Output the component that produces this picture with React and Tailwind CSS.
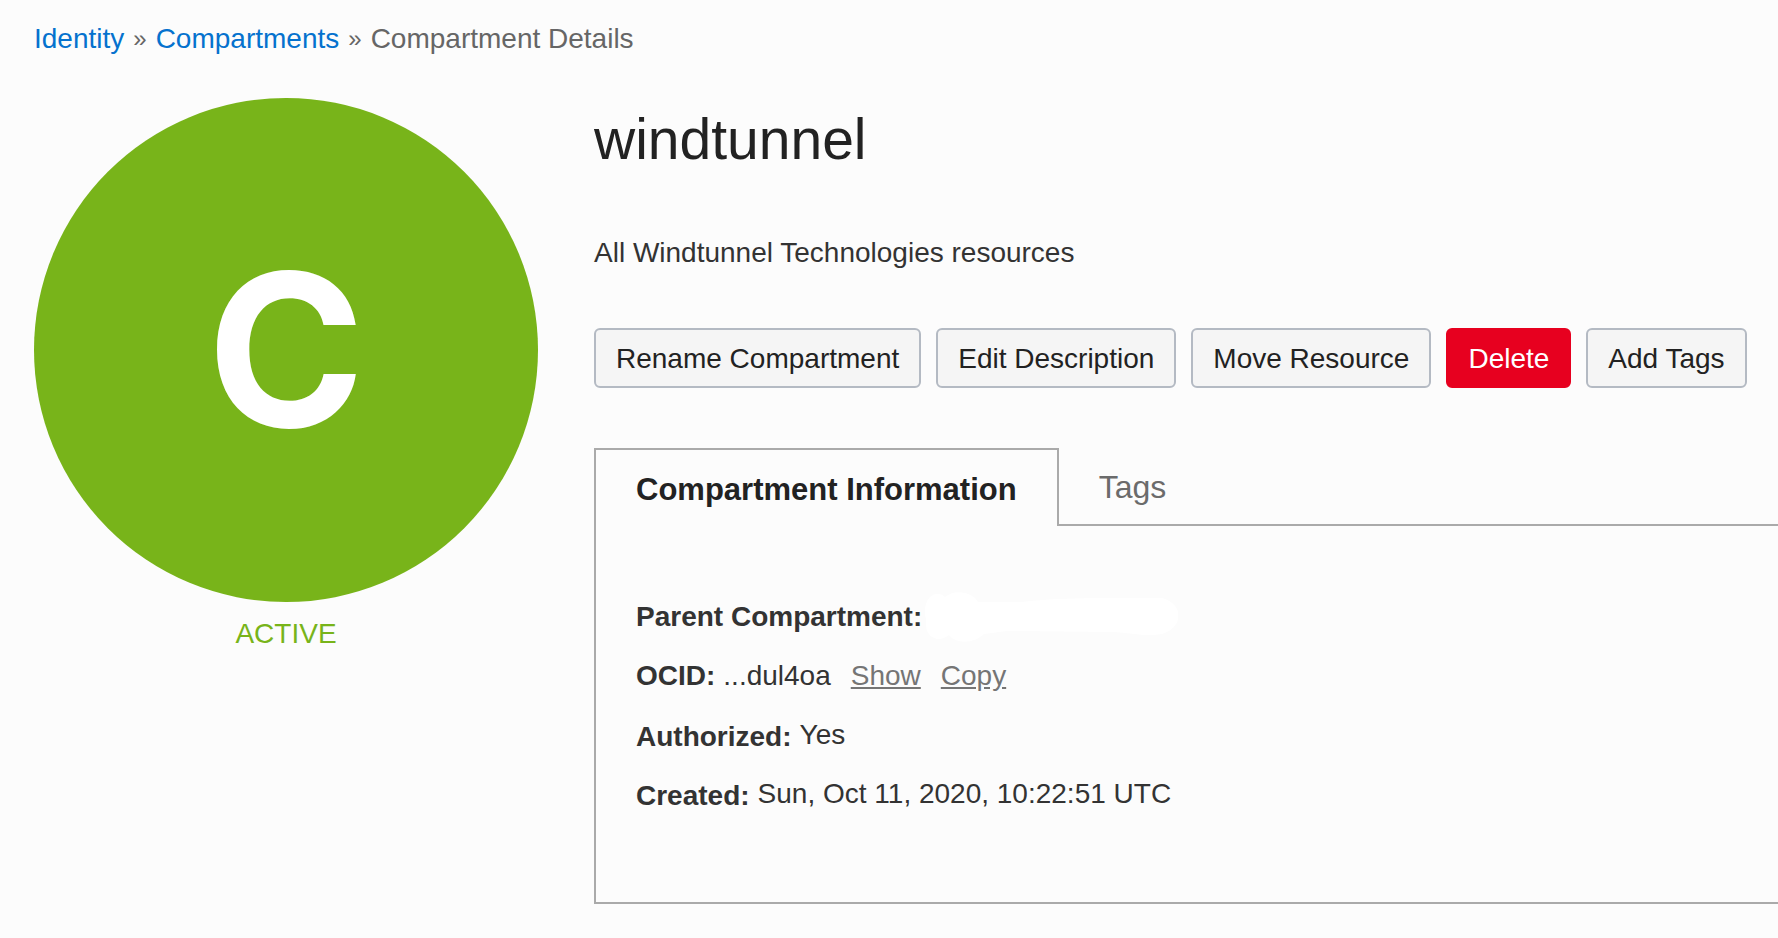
const actions = ['Rename Compartment', 'Edit Description', 'Move Resource', 'Delete', 'Add Tags'];

function ActionButton({ label }) {
  const tone =
    label === 'Delete'
      ? 'border-[#e7001f] bg-[#e7001f] text-white'
      : 'border-[#b4bac3] bg-[#f5f5f5] text-[#222]';
  return (
    <button
      type="button"
      className={`h-[60px] rounded-md border-2 px-5 pt-0.5 text-[28px] leading-10 whitespace-nowrap ${tone}`}
    >
      {label}
    </button>
  );
}

function Redaction() {
  return (
    <svg viewBox="0 0 256 50" className="h-[50px] w-[256px]" aria-hidden="true">
      <path
        fill="#fff"
        d="M3 17C4 5 14-3 23 5C32-3 50-1 56 10L100 10C130 6 165 6 240 6C262 12 262 35 240 42C225 45 210 41 190 40L85 39L62 42C52 52 34 52 27 43C17 51 5 46 4 34C5 26 2 24 3 17Z"
      />
    </svg>
  );
}

export default function App() {
  return (
    <div className="min-h-screen overflow-x-hidden bg-[#fcfcfc] pt-[19px] pl-[34px] font-['Liberation_Sans',Arial,sans-serif] text-[28px] leading-10 text-[#333]">
      <nav aria-label="Breadcrumb" className="flex gap-[9px] text-[#666]">
        <a href="#identity" className="text-[#0572ce]">Identity</a>
        <span className="text-2xl leading-10">»</span>
        <a href="#compartments" className="text-[#0572ce]">Compartments</a>
        <span className="text-2xl leading-10">»</span>
        <span>Compartment Details</span>
      </nav>

      <div className="mt-[39px] flex items-start gap-14">
        <aside className="w-[504px] shrink-0 text-center text-[#78b41a]">
          <div className="flex aspect-square items-center justify-center rounded-full bg-[#78b41a] pb-0.5 font-[Inter,sans-serif] text-[213px] leading-none font-bold text-white">
            C
          </div>
          <p className="mt-3">ACTIVE</p>
        </aside>

        <main className="min-w-0 flex-1 pt-[9px]">
          <h1 className="text-[57px] leading-[64px] text-[#222]">windtunnel</h1>
          <p className="mt-[62px]">All Windtunnel Technologies resources</p>

          <div className="mt-[55px] flex gap-[15px]">
            {actions.map((label) => (
              <ActionButton key={label} label={label} />
            ))}
          </div>

          <div role="tablist" className="mt-[60px] flex h-[78px] text-[32px]">
            <button
              type="button"
              role="tab"
              aria-selected="true"
              className="shrink-0 border-2 border-b-0 border-[#aaa] px-10 pt-1 text-[31px] font-bold text-[#222]"
            >
              Compartment Information
            </button>
            <div className="flex flex-1 border-b-2 border-[#aaa]">
              <button type="button" role="tab" aria-selected="false" className="px-10 pt-0.5 text-[#6b6b6b]">
                Tags
              </button>
            </div>
          </div>

          <dl className="flex flex-col gap-[19px] border-b-2 border-l-2 border-[#aaa] pt-[71px] pb-[88px] pl-10">
            <div className="flex h-10 items-center">
              <dt className="font-bold">Parent Compartment:</dt>
              <dd><Redaction /></dd>
            </div>
            <div className="flex h-10 gap-2">
              <dt className="font-bold">OCID:</dt>
              <dd className="flex gap-5">
                <span>...dul4oa</span>
                <a href="#show" className="text-[#757575] underline">Show</a>
                <a href="#copy" className="text-[#757575] underline">Copy</a>
              </dd>
            </div>
            <div className="flex h-10 gap-2">
              <dt className="pt-0.5 font-bold">Authorized:</dt>
              <dd>Yes</dd>
            </div>
            <div className="flex h-10 gap-2">
              <dt className="pt-0.5 font-bold">Created:</dt>
              <dd>Sun, Oct 11, 2020, 10:22:51 UTC</dd>
            </div>
          </dl>
        </main>
      </div>
    </div>
  );
}
